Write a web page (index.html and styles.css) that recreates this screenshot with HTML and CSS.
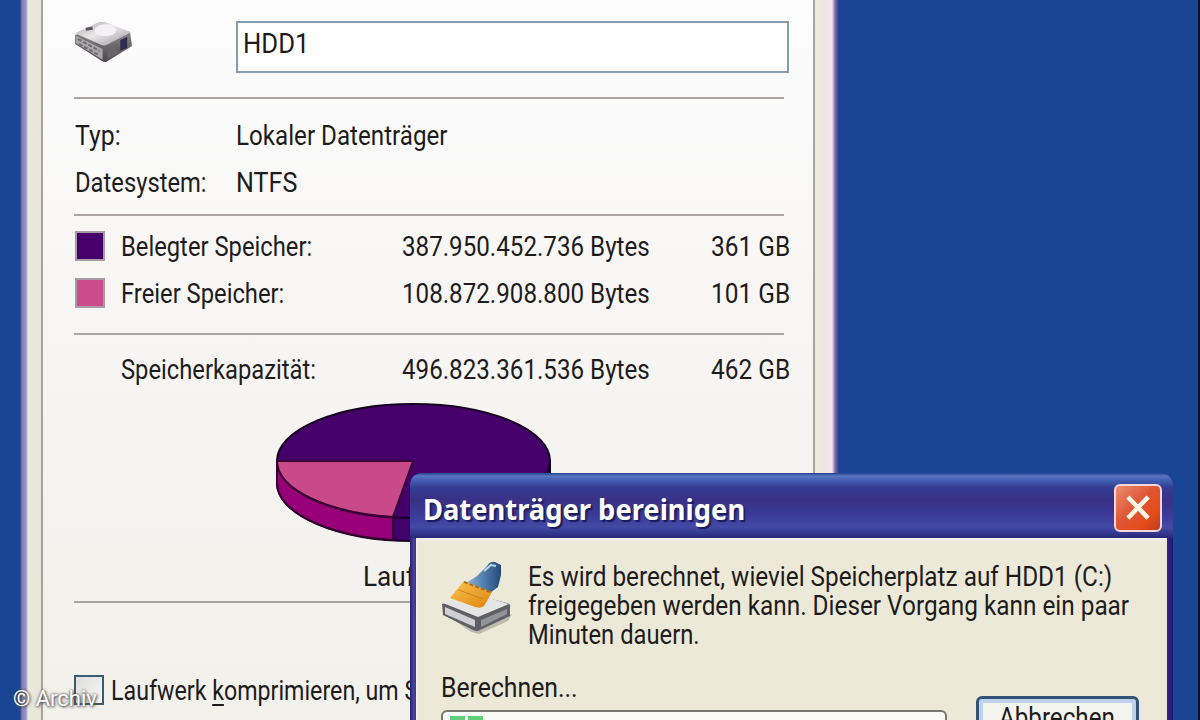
FILE: index.html
```html
<!DOCTYPE html>
<html lang="de">
<head>
  <meta charset="UTF-8" />
  <title>Eigenschaften von HDD1</title>
  <link rel="stylesheet" href="styles.css">
</head>
<body>
  <div class="desktop">
    <div class="properties">
      <div class="panel">
        <div class="name-row">
          <svg class="drive-icon" viewBox="0 0 62 44">
            <defs>
              <linearGradient id="driveTop" x1="0" y1="0" x2="1" y2="1"><stop offset="0" stop-color="#aaa8aa"/><stop offset=".45" stop-color="#e9e7e8"/><stop offset="1" stop-color="#98969b"/></linearGradient>
              <linearGradient id="driveSide" x1="0" y1="0" x2="0" y2="1"><stop offset="0" stop-color="#9b989b"/><stop offset="1" stop-color="#4c494c"/></linearGradient>
            </defs>
            <path d="M1 14 L25 2 Q28 1 32 2 L57 11 L59 25 L33 41 Q31 42 28 40 L1 23 Z" fill="url(#driveSide)"/>
            <path d="M1 12 L25 1 Q28 0 32 1 L58 11 L33 24 Q31 25 28 24 Z" fill="url(#driveTop)"/>
            <path d="M2 15 L29 28 V39 L2 22 Z" fill="#aaa7aa"/>
            <path d="M4 18 L26 30 M5 23 L25 34" stroke="#706d72" stroke-width="2" stroke-dasharray="4 2"/>
            <path d="M12 8 L19 7" stroke="#5a575c" stroke-width="3"/>
            <ellipse cx="32" cy="9" rx="11" ry="6" fill="#f3f1f3"/>
            <path d="M47 19 L54 16 V27 L47 30 Z" fill="#302d52"/>
            <path d="M34 28 L44 23 V33 L34 38 Z" fill="#68656a"/>
          </svg>
          <div class="name-input"><span class="t t-hdd">HDD1</span></div>
        </div>
        <div class="rule"></div>
        <div class="info">
          <div class="row"><div class="key"><span class="t t-typ">Typ:</span></div><span class="t">Lokaler Datenträger</span></div>
          <div class="row"><div class="key"><span class="t t-fs">Datesystem:</span></div><span class="t t-ntfs">NTFS</span></div>
        </div>
        <div class="rule"></div>
        <div class="usage">
          <div class="row"><div class="swatch used"></div><div class="label"><span class="t t-label">Belegter Speicher:</span></div><div class="bytes"><span class="t">387.950.452.736 Bytes</span></div><span class="t t-gb">361 GB</span></div>
          <div class="row"><div class="swatch free"></div><div class="label"><span class="t t-label">Freier Speicher:</span></div><div class="bytes"><span class="t">108.872.908.800 Bytes</span></div><span class="t t-gb">101 GB</span></div>
        </div>
        <div class="rule"></div>
        <div class="capacity">
          <div class="row"><div class="swatch none"></div><div class="label"><span class="t t-label">Speicherkapazität:</span></div><div class="bytes"><span class="t">496.823.361.536 Bytes</span></div><span class="t t-gb">462 GB</span></div>
        </div>
        <svg class="pie" viewBox="0 0 276 142">
          <path d="M1 59 V81 A136.500 58 0 0 0 274 81 V59 Z" fill="#43006a" stroke="#16001f" stroke-width="2"/>
          <path d="M1 59 V81 A136.500 58 0 0 0 117 138 V115 Z" fill="#98007a" stroke="#30002b" stroke-width="2"/>
          <ellipse cx="137.500" cy="59" rx="136.500" ry="57" fill="#46006c" stroke="#16001f" stroke-width="2"/>
          <path d="M137 59 H1 A136.500 57 0 0 0 117 115 Z" fill="#c94a8b" stroke="#3b0034" stroke-width="2"/>
        </svg>
        <div class="drive-label"><span class="t t-drive">Lauf</span></div>
        <div class="rule"></div>
        <div class="compress">
          <div class="checkbox"></div>
          <span class="t t-compress">Laufwerk <u>k</u>omprimieren, um S</span>
        </div>
      </div>
    </div>

    <div class="dialog">
      <div class="titlebar">
        <span class="title">Datenträger bereinigen</span>
        <div class="close"><svg viewBox="0 0 48 48"><path d="M13 12 L35 35 M35 12 L13 35"/></svg></div>
      </div>
      <div class="dialog-body">
        <div class="message">
          <svg class="clean-icon" viewBox="0 0 72 74">
            <defs>
              <linearGradient id="brush" x1="0" y1="0" x2="1" y2="1"><stop offset="0" stop-color="#ffc44d"/><stop offset="1" stop-color="#d98510"/></linearGradient>
              <linearGradient id="handle" x1="0" y1="0" x2="1" y2="0"><stop offset="0" stop-color="#8fb4d8"/><stop offset=".5" stop-color="#507fae"/><stop offset="1" stop-color="#254a76"/></linearGradient>
            </defs>
            <path d="M3 52 L37 69 L71 53 L67 60 L38 73 L30 71 Z" fill="#8e8c86" opacity=".5"/>
            <path d="M1 43 L31 33 L66 42 Q70 43 69 46 V55 L39 69 Q36 71 32 69 L2 54 Z" fill="#5f5f65"/>
            <path d="M2 42 L31 32 L68 43 L37 56 Z" fill="#e6e5e6"/>
            <path d="M4 46 L34 59 V66 L4 53 Z" fill="#d0d0d4"/>
            <path d="M40 59 L66 48 V53 L40 66 Z" fill="#929299"/>
            <path d="M25 22 L36 15 L46 5 Q49 0 54 1 L60 4 L60 14 L57 26 L49 32 Z" fill="url(#handle)"/>
            <path d="M43 10 L50 4 L55 5" fill="none" stroke="#bbd7e7" stroke-width="2"/>
            <path d="M23 20 L51 31 L43 45 Q40 48 34 46 L9 37 Z" fill="url(#brush)"/>
            <path d="M23 21 L49 31" fill="none" stroke="#a86c22" stroke-width="2" stroke-dasharray="4 2"/>
            <path d="M18 29 L42 38" fill="none" stroke="#c98423" stroke-width="1"/>
          </svg>
          <div class="message-text">
            <div><span class="t t-message">Es wird berechnet, wieviel Speicherplatz auf HDD1 (C:)</span></div>
            <div><span class="t t-message">freigegeben werden kann. Dieser Vorgang kann ein paar</span></div>
            <div><span class="t t-label">Minuten dauern.</span></div>
          </div>
        </div>
        <div class="work">
          <div class="progress-side">
            <span class="t t-calc">Berechnen...</span>
            <div class="progress"><i></i><i></i></div>
          </div>
          <div class="cancel"><span class="t">Abbrechen</span></div>
        </div>
      </div>
    </div>
    <div class="copyright">© Archiv</div>
  </div>
</body>
</html>
```
FILE: styles.css
```css
* { box-sizing: border-box; }

body {
  margin: 0;
  font-family: Roboto, "Liberation Sans", sans-serif;
  font-size: 27px;
  color: #1d1b1c;
}

.desktop {
  position: relative;
  width: 1200px;
  height: 720px;
  overflow: hidden;
  background: #194594;
  border-right: 2px solid #07102c;
}

/* narrow system font */
.t {
  display: inline-block;
  white-space: nowrap;
  line-height: 29px;
  transform: scaleX(.895);
  transform-origin: left center;
}

.t-hdd { transform: scaleX(.95); }
.t-typ { transform: scaleX(.92); }
.t-fs { transform: scaleX(.88); }
.t-ntfs { transform: scaleX(.93); }
.t-label { transform: scaleX(.88); }
.t-gb { transform: scaleX(.905); }
.t-drive { transform: scaleX(.97); }
.t-compress { transform: scaleX(.86); }
.t-message { transform: scaleX(.901); }
.t-calc { transform: scaleX(.918); }

.properties {
  width: 820px;
  height: 720px;
  margin-left: 20px;
  padding: 0 25px 0 21px;
  background: linear-gradient(90deg, #243f91 0, #8381b5 2px, #9692bd 6px, #e9e5ee 8px, #e9e8d9 10px, #e9e6d9 21px, #edead9 797px, #eee5e1 804px, #f3e5f0 812px, #7e70a6 815px, #293b8f 819px, #194594);
}

.panel {
  height: 720px;
  padding: 0 27px 0 31px;
  border-left: 2px solid #a5a49b;
  border-right: 2px solid #a3a6a4;
  background: linear-gradient(#fdfdfe, #f9f8f7 30%, #f4f2ee 75%, #f3f1eb);
}

.name-row {
  display: flex;
  height: 97px;
  padding-top: 21px;
}

.drive-icon {
  flex: none;
  width: 61px;
  height: 44px;
  margin-right: 101px;
}

.name-input {
  flex: none;
  width: 553px;
  height: 52px;
  padding: 7px 5px;
  border: 2px solid #879dab;
  background: #fefefe;
}

.name-input .t { vertical-align: top; }

.rule {
  width: 710px;
  height: 2px;
  background: #aaa5a2;
}

.row {
  display: flex;
  align-items: center;
  height: 47px;
}

/* values sit on the same baseline as the wrapped labels */
.row > .t { padding-top: 2px; }

.info {
  height: 115px;
  padding-top: 13px;
}

.key {
  width: 162px;
  padding-left: 1px;
}

.usage {
  height: 117px;
  padding-top: 7px;
}

.capacity {
  height: 67px;
  padding-top: 11px;
}

.swatch {
  flex: none;
  width: 30px;
  height: 30px;
  margin: -2px 16px 0 1px;
  border: 2px solid #a59da3;
}

.used { background: #47006b; }
.free { background: #cb4b8c; }
.none { border: 0; }

.label {
  flex: none;
  width: 281px;
}

.bytes {
  flex: none;
  width: 309px;
}

.pie {
  display: block;
  width: 276px;
  height: 142px;
  margin-left: 202px;
}

.drive-label {
  height: 57px;
  padding: 19px 0 0 289px;
  line-height: 29px;
}

.compress {
  display: flex;
  align-items: center;
  height: 30px;
  margin-top: 72px;
}

.compress .t { margin-top: 3px; }

.checkbox {
  flex: none;
  width: 30px;
  height: 30px;
  margin-right: 7px;
  border: 2px solid #3a5b70;
  background: linear-gradient(135deg, #dedfdb, #f7f8f7);
}

u {
  text-underline-offset: 4px;
  text-decoration-thickness: 2px;
}

.dialog {
  position: absolute;
  left: 410px;
  top: 473px;
  width: 763px;
  height: 260px;
  padding: 0 6px;
  border-radius: 12px 12px 0 0;
  background: linear-gradient(90deg, #262374, #4b449c 4px, #3a348d 6px, #30298b 757px, #1f1472);
}

.titlebar {
  display: flex;
  align-items: center;
  justify-content: space-between;
  height: 65px;
  margin: 0 -6px;
  padding: 4px 11px 0 13px;
  border-radius: 12px 12px 0 0;
  background: linear-gradient(#24408f 0, #5877c2 3px, #405baf 8px, #343c91 15px, #393185 27px, #3a3a98 42px, #4549a4 54px, #353b94 59px, #282776 65px);
}

.title {
  margin-top: 2px;
  font-family: "Noto Sans", "Open Sans", sans-serif;
  font-size: 28px;
  font-weight: bold;
  line-height: 36px;
  color: #fff;
  white-space: nowrap;
  text-shadow: 2px 2px 1px #1b1d58;
  transform: scaleX(.976);
  transform-origin: left center;
}

.close {
  width: 48px;
  height: 48px;
  border: 2px solid #f6d5dc;
  border-radius: 6px;
  background: linear-gradient(135deg, #e98d70, #df5634 45%, #e54b18 75%, #b84122);
}

.close svg {
  display: block;
  width: 44px;
  height: 44px;
  fill: none;
  stroke: #fff5e7;
  stroke-width: 5;
}

.dialog-body {
  height: 195px;
  padding: 23px 26px 0 23px;
  border-left: 2px solid #f1efee;
  border-top: 2px solid #f1eff1;
  background: #ede9d8;
}

.message {
  display: flex;
  height: 111px;
}

.clean-icon {
  flex: none;
  width: 72px;
  height: 74px;
  margin: -2px 15px 0 0;
}

.message-text div {
  display: flex;
  height: 29px;
}

.work {
  display: flex;
  justify-content: space-between;
}

.progress-side { width: 506px; }

.progress-side .t { vertical-align: top; }

.progress {
  display: flex;
  gap: 3px;
  height: 30px;
  margin-top: 4px;
  padding: 4px 7px;
  border: 2px solid #77776f;
  border-radius: 6px;
  background: #fafaf6;
}

.progress i {
  width: 15px;
  background: #62cf7b;
}

.cancel {
  width: 163px;
  height: 46px;
  margin: 22px 2px 0 0;
  padding: 5px 20px;
  border: 3px solid #315474;
  border-radius: 6px;
  background: #f4f4ef;
  box-shadow: inset 0 0 0 4px #bed1ec;
}

.cancel .t { vertical-align: top; }

.copyright {
  position: absolute;
  left: 13px;
  top: 684px;
  font-size: 22px;
  line-height: 30px;
  color: #fff;
  text-shadow: 0 0 3px #444, 1px 1px 3px #555;
}
```
